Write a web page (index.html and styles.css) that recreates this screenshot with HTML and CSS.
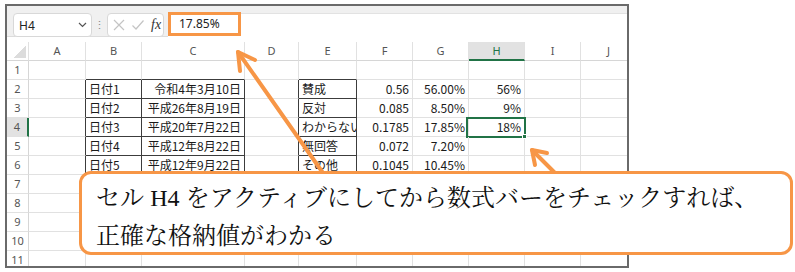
FILE: index.html
```html
<!DOCTYPE html>
<html lang="ja">

<head>
  <meta charset="UTF-8">
  <title>数式バーで格納値を確認</title>
  <link rel="stylesheet" href="styles.css">
</head>

<body>
  <div class="frame">
    <!-- barra de fórmulas -->
    <div class="fbar">
      <div class="namebox">
        <span>H4</span>
        <svg class="chev" width="9" height="6" viewBox="0 0 9 6"><polyline points="1,1 4.5,4.5 8,1" fill="none" stroke="#555" stroke-width="1.2"/></svg>
      </div>
      <span class="dots">⋮</span>
      <div class="btns">
        <svg width="14" height="14" viewBox="0 0 14 14"><path d="M2 2 L12 12 M12 2 L2 12" stroke="#c4c4c4" stroke-width="1.2" fill="none"/></svg>
        <svg width="14" height="14" viewBox="0 0 14 14"><polyline points="1.5,7.5 5,11 12.5,2.5" stroke="#c4c4c4" stroke-width="1.2" fill="none"/></svg>
        <span class="fx">fx</span>
      </div>
      <div class="finput">
        <span class="hl">17.85%</span>
      </div>
    </div>

    <!-- hoja -->
    <div class="sheet">
      <div class="row head">
        <div class="c corner"></div>
        <div class="c h">A</div>
        <div class="c h">B</div>
        <div class="c h">C</div>
        <div class="c h">D</div>
        <div class="c h">E</div>
        <div class="c h">F</div>
        <div class="c h">G</div>
        <div class="c h on">H</div>
        <div class="c h">I</div>
        <div class="c h">J</div>
      </div>
      <div class="row">
        <div class="c n">1</div>
        <div class="c"></div>
        <div class="c bt"></div>
        <div class="c bt"></div>
        <div class="c"></div>
        <div class="c bt"></div>
        <div class="c"></div>
        <div class="c"></div>
        <div class="c"></div>
        <div class="c"></div>
        <div class="c"></div>
      </div>
      <div class="row">
        <div class="c n">2</div>
        <div class="c br"></div>
        <div class="c bx">日付1</div>
        <div class="c bx r">令和4年3月10日</div>
        <div class="c br"></div>
        <div class="c bx">賛成</div>
        <div class="c r">0.56</div>
        <div class="c r">56.00%</div>
        <div class="c r">56%</div>
        <div class="c"></div>
        <div class="c"></div>
      </div>
      <div class="row">
        <div class="c n">3</div>
        <div class="c br"></div>
        <div class="c bx">日付2</div>
        <div class="c bx r">平成26年8月19日</div>
        <div class="c br"></div>
        <div class="c bx">反対</div>
        <div class="c r">0.085</div>
        <div class="c r">8.50%</div>
        <div class="c r">9%</div>
        <div class="c"></div>
        <div class="c"></div>
      </div>
      <div class="row">
        <div class="c n on">4</div>
        <div class="c br"></div>
        <div class="c bx">日付3</div>
        <div class="c bx r">平成20年7月22日</div>
        <div class="c br"></div>
        <div class="c bx">わからない</div>
        <div class="c r">0.1785</div>
        <div class="c r">17.85%</div>
        <div class="c r sel">18%<span class="handle"></span></div>
        <div class="c"></div>
        <div class="c"></div>
      </div>
      <div class="row">
        <div class="c n">5</div>
        <div class="c br"></div>
        <div class="c bx">日付4</div>
        <div class="c bx r">平成12年8月22日</div>
        <div class="c br"></div>
        <div class="c bx">無回答</div>
        <div class="c r">0.072</div>
        <div class="c r">7.20%</div>
        <div class="c"></div>
        <div class="c"></div>
        <div class="c"></div>
      </div>
      <div class="row">
        <div class="c n">6</div>
        <div class="c br"></div>
        <div class="c bx">日付5</div>
        <div class="c bx r">平成12年9月22日</div>
        <div class="c br"></div>
        <div class="c bx">その他</div>
        <div class="c r">0.1045</div>
        <div class="c r">10.45%</div>
        <div class="c"></div>
        <div class="c"></div>
        <div class="c"></div>
      </div>
      <div class="row">
        <div class="c n">7</div>
        <div class="c br"></div>
        <div class="c bx"></div>
        <div class="c bx"></div>
        <div class="c"></div>
        <div class="c"></div>
        <div class="c"></div>
        <div class="c"></div>
        <div class="c"></div>
        <div class="c"></div>
        <div class="c"></div>
      </div>
      <div class="row">
        <div class="c n">8</div>
        <div class="c br"></div>
        <div class="c bx"></div>
        <div class="c bx"></div>
        <div class="c"></div>
        <div class="c"></div>
        <div class="c"></div>
        <div class="c"></div>
        <div class="c"></div>
        <div class="c"></div>
        <div class="c"></div>
      </div>
      <div class="row">
        <div class="c n">9</div>
        <div class="c br"></div>
        <div class="c bx"></div>
        <div class="c bx"></div>
        <div class="c"></div>
        <div class="c"></div>
        <div class="c"></div>
        <div class="c"></div>
        <div class="c"></div>
        <div class="c"></div>
        <div class="c"></div>
      </div>
      <div class="row">
        <div class="c n">10</div>
        <div class="c br"></div>
        <div class="c bx"></div>
        <div class="c bx"></div>
        <div class="c"></div>
        <div class="c"></div>
        <div class="c"></div>
        <div class="c"></div>
        <div class="c"></div>
        <div class="c"></div>
        <div class="c"></div>
      </div>
      <div class="row">
        <div class="c n">11</div>
        <div class="c"></div>
        <div class="c"></div>
        <div class="c"></div>
        <div class="c"></div>
        <div class="c"></div>
        <div class="c"></div>
        <div class="c"></div>
        <div class="c"></div>
        <div class="c"></div>
        <div class="c"></div>
      </div>
    </div>
  </div>

  <!-- flechas y globo de explicación -->
  <svg class="arrows" width="795" height="272" viewBox="0 0 795 272">
    <g fill="none" stroke="#f79646" stroke-width="4" stroke-linecap="round" stroke-linejoin="round">
      <path d="M323 173 L238 52"/>
      <path d="M255 60 L238 52 L240 71"/>
      <path d="M556 174 L532 150"/>
      <path d="M547 153 L532 150 L535 165"/>
    </g>
  </svg>
  <div class="callout">
    <p>セル <span class="lat">H4</span> をアクティブにしてから数式バーをチェックすれば、</p>
    <p>正確な格納値がわかる</p>
  </div>
</body>

</html>
```

FILE: styles.css
```css
* {
  margin: 0;
  padding: 0;
}

*,
*::before,
*::after {
  box-sizing: border-box;
}

body {
  width: 795px;
  height: 272px;
  overflow: hidden;
  background: #fff;
  position: relative;
  font-family: "Noto Sans", sans-serif;
}

/* marco de la captura */
.frame {
  position: relative;
  margin: 4px 0 0 5px;
  width: 624px;
  height: 264px;
  border: 2px solid #6a6a6a;
  overflow: hidden;
  background: #fff;
}

/* barra de fórmulas */
.fbar {
  display: flex;
  align-items: flex-start;
  height: 31px;
  padding: 7px 0 0 6px;
  background: #f0f0f0;
  border-bottom: 1px solid #dcdcdc;
}

.namebox {
  display: flex;
  align-items: center;
  justify-content: space-between;
  width: 79px;
  height: 24px;
  padding: 0 4px 0 5px;
  background: #fff;
  border: 1px solid #d8d8d8;
  border-radius: 4px;
  font-size: 12px;
  color: #222;
}

.dots {
  width: 15px;
  text-align: center;
  font-size: 11px;
  line-height: 24px;
  color: #888;
}

.btns {
  display: flex;
  align-items: center;
  gap: 5px;
  width: 57px;
  height: 24px;
  padding-left: 4px;
  background: #fff;
  border: 1px solid #d8d8d8;
  border-radius: 4px;
}

.fx {
  font-family: "Liberation Serif", serif;
  font-style: italic;
  font-size: 14px;
  color: #333;
  margin-left: 1px;
}

.finput {
  flex: 1;
  height: 24px;
  margin-left: 4px;
  background: #fff;
  border-top: 1px solid #e2e2e2;
}

.hl {
  display: block;
  width: 73px;
  height: 24px;
  margin-top: -2px;
  padding-left: 8px;
  border: 3px solid #f79646;
  font-size: 12px;
  line-height: 18px;
  color: #222;
}

/* hoja de cálculo */
.sheet {
  padding-top: 5px;
}

.row {
  display: grid;
  grid-template-columns: 22px 57px 56px 103px 54px 58px 56px 56px 56px 56px 56px;
  height: 19px;
}

.c {
  position: relative;
  border-right: 1px solid #e1e1e1;
  border-bottom: 1px solid #e1e1e1;
  padding: 0 3px;
  font-family: "Noto Sans CJK JP", sans-serif;
  font-size: 12px;
  line-height: 18px;
  color: #1a1a1a;
  white-space: nowrap;
  overflow: hidden;
}

.r {
  text-align: right;
}

.br {
  border-right-color: #3c3c3c;
}

.bt {
  border-bottom-color: #3c3c3c;
}

.bx {
  border-right-color: #3c3c3c;
  border-bottom-color: #3c3c3c;
}

.head .c {
  border-bottom-color: #d6d6d6;
}

.h {
  text-align: center;
  font-family: "Noto Sans", sans-serif;
  font-size: 11px;
  color: #555;
}

.h.on {
  background: #e2e2e2;
  color: #217346;
  border-bottom: 2px solid #217346;
}

.corner::after {
  content: "";
  position: absolute;
  right: 2px;
  bottom: 2px;
  width: 12px;
  height: 12px;
  background: linear-gradient(to bottom right, transparent 50%, #dcdcdc 50%);
}

.n {
  text-align: center;
  padding: 0;
  font-family: "Noto Sans", sans-serif;
  font-size: 11px;
  color: #555;
  border-right-color: #d6d6d6;
}

.n.on {
  background: #e2e2e2;
  border-right: 2px solid #217346;
}

/* celda activa */
.sel {
  overflow: visible;
}

.sel::after {
  content: "";
  position: absolute;
  top: -1px;
  left: -3px;
  right: -2px;
  bottom: -2px;
  border: 2px solid #217346;
}

.handle {
  position: absolute;
  right: -3px;
  bottom: -3px;
  width: 5px;
  height: 5px;
  background: #217346;
  border: 1px solid #fff;
  z-index: 1;
}

/* anotaciones */
.arrows {
  position: absolute;
  left: 0;
  top: 0;
}

.callout {
  position: absolute;
  left: 79px;
  top: 171px;
  width: 714px;
  height: 84px;
  padding: 4px 0 0 14px;
  background: #fff;
  border: 3px solid #f79646;
  border-radius: 12px;
  font-family: "Noto Serif CJK JP", "Noto Sans CJK JP", serif;
  font-size: 24px;
  line-height: 35px;
  color: #111;
}

.lat {
  font-family: "Liberation Serif", serif;
}
```
